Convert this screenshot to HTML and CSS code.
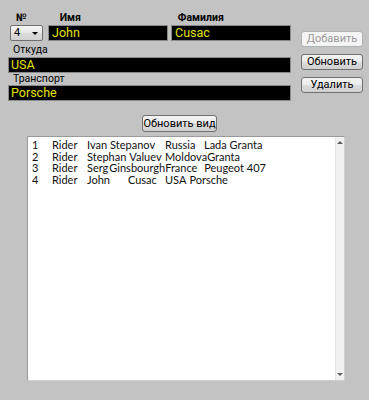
FILE: index.html
```html
<!DOCTYPE html>
<html lang="ru">
<head>
<meta charset="utf-8">
<title>Riders</title>
<link rel="stylesheet" href="styles.css">
</head>
<body>
<div class="app">
  <div class="top">
    <div class="form">
      <div class="labels">
        <span class="lbl lbl-num">№</span>
        <span class="lbl lbl-first">Имя</span>
        <span class="lbl lbl-last">Фамилия</span>
      </div>
      <div class="fields">
        <div class="combo"><span class="combo-val">4</span><span class="combo-arrow"></span></div>
        <div class="field f-first">John</div>
        <div class="field f-last">Cusac</div>
      </div>
      <div class="caption">Откуда</div>
      <div class="field f-wide">USA</div>
      <div class="caption caption-tight">Транспорт</div>
      <div class="field f-wide">Porsche</div>
    </div>
    <div class="actions">
      <button class="btn btn-disabled" disabled>Добавить</button>
      <button class="btn">Обновить</button>
      <button class="btn">Удалить</button>
    </div>
  </div>
  <button class="btn btn-refresh">Обновить вид</button>
  <div class="listbox">
    <ul class="items">
      <li class="row"><span class="c-num">1</span><span class="c-role">Rider</span><span class="c-name">Ivan<span class="g-s">Stepanov</span></span><span class="c-country">Russia</span><span>Lada Granta</span></li>
      <li class="row"><span class="c-num">2</span><span class="c-role">Rider</span><span class="c-name">Stephan<span class="g-s">Valuev</span></span><span class="c-country">Moldova</span><span>Granta</span></li>
      <li class="row"><span class="c-num">3</span><span class="c-role">Rider</span><span class="c-name">Serg<span class="g-xs">Ginsbourgh</span></span><span class="c-country">France</span><span>Peugeot 407</span></li>
      <li class="row"><span class="c-num">4</span><span class="c-role">Rider</span><span class="c-name">John<span class="g-l">Cusac</span></span><span class="c-country c-free">USA</span><span class="g-s">Porsche</span></li>
    </ul>
    <div class="scrollbar">
      <span class="arr arr-up"></span>
      <span class="arr arr-down"></span>
    </div>
  </div>
</div>
</body>
</html>
```
FILE: styles.css
```css
html, body {
  margin: 0;
  padding: 0;
  background: #c3c3c3;
}
body {
  width: 369px;
  height: 400px;
  overflow: hidden;
  font-family: Roboto, "Noto Sans", sans-serif;
  font-size: 11px;
  color: #000;
}
.app {
  display: flex;
  flex-direction: column;
  align-items: flex-start;
}
.top {
  display: flex;
  padding-left: 8px;
}
.form {
  width: 283px;
  display: flex;
  flex-direction: column;
}
.labels {
  display: flex;
  height: 14px;
  margin-top: 11px;
  line-height: 13px;
}
.lbl {
  font-weight: bold;
  font-size: 10.5px;
}
.lbl-num { margin-left: 8px; }
.lbl-first { margin-left: 33px; }
.lbl-last { margin-left: 97px; }
.fields {
  display: flex;
  height: 16px;
}
.combo {
  box-sizing: border-box;
  width: 33px;
  height: 16px;
  margin-left: 2px;
  border: 1px solid #707070;
  border-radius: 2px;
  background: linear-gradient(#f6f6f6, #e6e6e6 50%, #dcdcdc 50%, #d2d2d2);
  display: flex;
  align-items: center;
  justify-content: space-between;
  padding: 0 4px 0 3px;
}
.combo-val {
  font-size: 11px;
  line-height: 14px;
}
.combo-arrow {
  width: 0;
  height: 0;
  border-left: 3px solid transparent;
  border-right: 3px solid transparent;
  border-top: 3px solid #000;
}
.field {
  box-sizing: border-box;
  height: 16px;
  background: #000;
  border: 1px solid #8a8a8a;
  color: #e2e200;
  font-size: 12.5px;
  line-height: 14px;
  padding-left: 3px;
}
.f-first {
  width: 120px;
  margin-left: 5px;
}
.f-last {
  width: 120px;
  margin-left: 3px;
}
.f-wide {
  width: 283px;
  padding-left: 2px;
}
.caption {
  height: 16px;
  box-sizing: border-box;
  padding: 3px 0 0 5px;
  line-height: 12px;
  font-size: 10.5px;
}
.caption-tight {
  height: 12px;
  padding-top: 0;
}
.actions {
  display: flex;
  flex-direction: column;
  gap: 7px;
  margin-left: 10px;
  padding-top: 31px;
}
.btn {
  box-sizing: border-box;
  width: 62px;
  height: 16px;
  padding: 0;
  border: 1px solid #707070;
  border-radius: 3px;
  background: linear-gradient(#f3f3f3, #ebebeb 50%, #dddddd 50%, #cfcfcf);
  font-family: Roboto, "Noto Sans", sans-serif;
  font-size: 11px;
  line-height: 14px;
  color: #000;
}
.btn-disabled {
  background: #f4f4f4;
  border-color: #adb2b5;
  color: #9a9a9a;
}
.btn-refresh {
  width: 75px;
  height: 17px;
  margin: 14px 0 0 142px;
}
.listbox {
  box-sizing: border-box;
  width: 318px;
  height: 245px;
  margin: 4px 0 0 27px;
  background: #fff;
  border: 1px solid #9a9a9a;
  border-right-color: #d0d0d0;
  border-bottom-color: #d0d0d0;
  display: flex;
}
.items {
  list-style: none;
  margin: 0;
  padding: 2px 0 0 4px;
  flex: 1;
  font-family: "Lato", "Noto Sans", sans-serif;
  font-size: 11px;
  line-height: 12px;
  color: #111;
}
.row {
  display: flex;
  white-space: nowrap;
  height: 11.7px;
}
.c-num { width: 20px; flex: none; }
.c-role { width: 35px; flex: none; }
.c-name { min-width: 78px; flex: none; }
.c-country { min-width: 39px; flex: none; }
.c-free { min-width: 0; }
.g-xs { margin-left: 1px; }
.g-s { margin-left: 3px; }
.g-l { margin-left: 18px; }
.scrollbar {
  width: 8px;
  background: #f1f1f1;
  border-left: 1px solid #e4e4e4;
  position: relative;
}
.arr {
  position: absolute;
  left: 1px;
  width: 0;
  height: 0;
  border-left: 3px solid transparent;
  border-right: 3px solid transparent;
}
.arr-up {
  top: 4px;
  border-bottom: 3px solid #606060;
}
.arr-down {
  bottom: 4px;
  border-top: 3px solid #606060;
}
```
